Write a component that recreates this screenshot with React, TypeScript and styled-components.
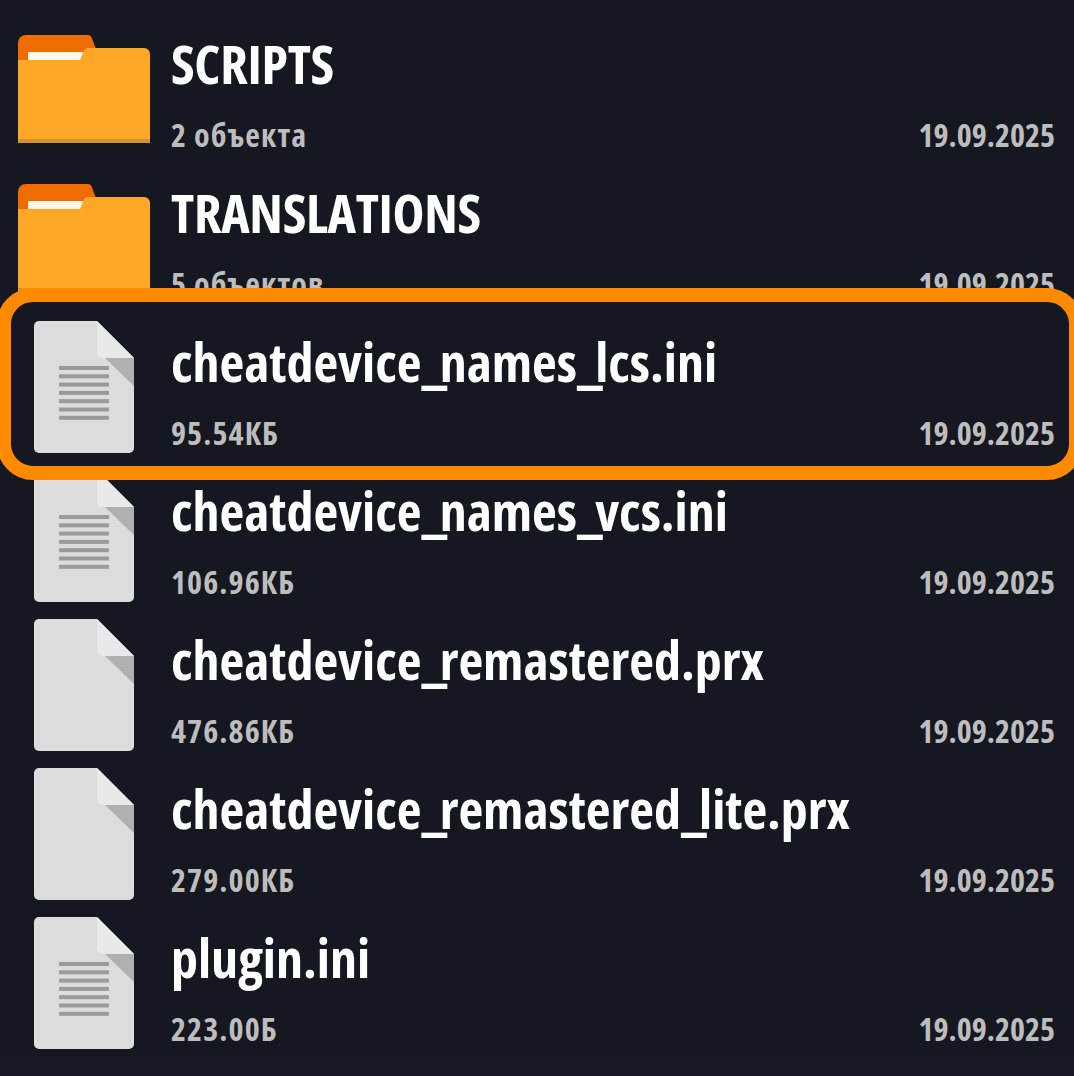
import React from "react";
import styled, { createGlobalStyle } from "styled-components";

const Global = createGlobalStyle`
  html, body { margin: 0; padding: 0; background: #171a23; overflow: hidden; }
  body { width: 1074px; height: 1076px; }
`;

const Screen = styled.div`
  width: 1074px;
  height: 1076px;
  overflow: hidden;
  background: #171a23;
  font-family: "Open Sans", "Liberation Sans", sans-serif;
  font-stretch: 75%;
  font-weight: 700;
`;

const List = styled.div`
  display: flex;
  flex-direction: column;
  height: 1057px;
  padding-top: 7px;
  box-sizing: border-box;
  background: #151821;
`;

const Row = styled.div`
  position: relative;
  display: flex;
  flex: 0 0 149px;
  height: 149px;
`;

const IconSlot = styled.div<{ $folder?: boolean }>`
  flex: 0 0 168px;
  display: flex;
  justify-content: center;
  align-items: flex-start;
  padding-top: ${(p) => (p.$folder ? 28 : 16)}px;
  box-sizing: border-box;
`;

const Body = styled.div`
  flex: 1;
  margin-left: 3px;
  padding-right: 19px;
  display: flex;
  flex-direction: column;
  padding-top: 20px;
`;

const Name = styled.div<{ $caps?: boolean }>`
  color: #fff;
  font-size: 54px;
  line-height: 72px;
  white-space: nowrap;
  letter-spacing: ${(p) => (p.$caps ? "-0.3px" : "0")};
`;

const Underscore = styled.span`
  letter-spacing: -7.5px;
`;

const Meta = styled.div`
  display: flex;
  justify-content: space-between;
  color: #bdbdbd;
  font-size: 32px;
  line-height: 42px;
  margin-top: 15px;
`;

const Size = styled.span`
  letter-spacing: 1.1px;
`;

const Highlight = styled.div`
  position: absolute;
  left: -3px;
  right: -9px;
  top: -17px;
  height: 192px;
  box-sizing: border-box;
  border: 14px solid #ff8a00;
  border-radius: 36px;
  pointer-events: none;
  z-index: 2;
`;

const Folder = () => (
  <svg width="132" height="108" viewBox="0 0 132 108">
    <path d="M0 8a8 8 0 0 1 8-8h62a4 4 0 0 1 3.600 2.400L78 14v16H0z" fill="#ef6c00" />
    <path d="M10 17h56l-3 8H10z" fill="#fff8e8" />
    <path d="M0 25h62l4-9.500a4 4 0 0 1 3.600-2.500H126a6 6 0 0 1 6 6v85H0z" fill="#ffa726" />
    <rect x="0" y="104" width="132" height="4" fill="#d6922c" />
  </svg>
);

const File = ({ lines }: { lines?: boolean }) => (
  <svg width="100" height="132" viewBox="0 0 100 132">
    <path d="M5 0H63L100 37V127a5 5 0 0 1-5 5H5a5 5 0 0 1-5-5V5a5 5 0 0 1 5-5z" fill="#dcdcdc" />
    <path d="M71 37H100V65z" fill="#b0b0b0" />
    <path d="M63 0L100 37H68a5 5 0 0 1-5-5z" fill="#e9e9e9" />
    {lines &&
      [0, 1, 2, 3, 4, 5, 6].map((i) => (
        <rect key={i} x="25" y={45 + i * 8.3} width="50" height="4" fill="#9a9a9a" />
      ))}
  </svg>
);

type Item = { name: string; sub: string; kind: "folder" | "ini" | "prx"; active?: boolean };

const items: Item[] = [
  { name: "SCRIPTS", sub: "2 объекта", kind: "folder" },
  { name: "TRANSLATIONS", sub: "5 объектов", kind: "folder" },
  { name: "cheatdevice_names_lcs.ini", sub: "95.54КБ", kind: "ini", active: true },
  { name: "cheatdevice_names_vcs.ini", sub: "106.96КБ", kind: "ini" },
  { name: "cheatdevice_remastered.prx", sub: "476.86КБ", kind: "prx" },
  { name: "cheatdevice_remastered_lite.prx", sub: "279.00КБ", kind: "prx" },
  { name: "plugin.ini", sub: "223.00Б", kind: "ini" },
];

const renderName = (name: string) =>
  name.split("_").map((part, i) => (
    <React.Fragment key={i}>
      {i > 0 && <Underscore>_</Underscore>}
      {part}
    </React.Fragment>
  ));

export default function App() {
  return (
    <>
      <Global />
      <Screen>
        <List>
          {items.map((it) => (
            <Row key={it.name}>
              <IconSlot $folder={it.kind === "folder"}>
                {it.kind === "folder" ? <Folder /> : <File lines={it.kind === "ini"} />}
              </IconSlot>
              <Body>
                <Name $caps={it.kind === "folder"}>{renderName(it.name)}</Name>
                <Meta>
                  <Size>{it.sub}</Size>
                  <span>19.09.2025</span>
                </Meta>
              </Body>
              {it.active && <Highlight />}
            </Row>
          ))}
        </List>
      </Screen>
    </>
  );
}
